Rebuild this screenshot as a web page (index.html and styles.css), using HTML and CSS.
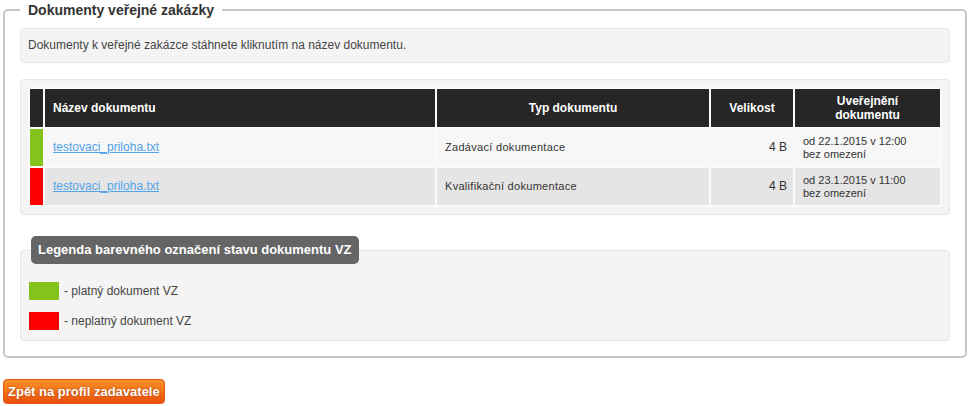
FILE: index.html
```html
<!DOCTYPE html>
<html lang="cs">
<head>
    <meta charset="UTF-8">
    <title>Dokumenty veřejné zakázky</title>
    <link rel="stylesheet" href="styles.css">
</head>
<body>
    <div class="page">
        <fieldset class="docs">
            <legend>Dokumenty veřejné zakázky</legend>
            <div class="info-box">Dokumenty k veřejné zakázce stáhnete kliknutím na název dokumentu.</div>

            <div class="table-panel">
                <table class="doc-table">
                    <thead>
                        <tr>
                            <th class="state"></th>
                            <th class="name">Název dokumentu</th>
                            <th class="type">Typ dokumentu</th>
                            <th class="size">Velikost</th>
                            <th class="date">Uveřejnění<br>dokumentu</th>
                        </tr>
                    </thead>
                    <tbody>
                        <tr class="odd">
                            <td class="state valid"></td>
                            <td class="name"><a href="#">testovaci_priloha.txt</a></td>
                            <td class="type">Zadávací dokumentace</td>
                            <td class="size">4 B</td>
                            <td class="date">od 22.1.2015 v 12:00<br>bez omezení</td>
                        </tr>
                        <tr class="even">
                            <td class="state invalid"></td>
                            <td class="name"><a href="#">testovaci_priloha.txt</a></td>
                            <td class="type">Kvalifikační dokumentace</td>
                            <td class="size">4 B</td>
                            <td class="date">od 23.1.2015 v 11:00<br>bez omezení</td>
                        </tr>
                    </tbody>
                </table>
            </div>

            <div class="legend-panel">
                <div class="legend-title">Legenda barevného označení stavu dokumentu VZ</div>
                <div class="legend-item"><span class="swatch valid"></span>- platný dokument VZ</div>
                <div class="legend-item"><span class="swatch invalid"></span>- neplatný dokument VZ</div>
            </div>
        </fieldset>

        <a class="back-button" href="#">Zpět na profil zadavatele</a>
    </div>
</body>
</html>
```

FILE: styles.css
```css
body {
    margin: 0;
    font-family: "Liberation Sans", Arial, sans-serif;
    font-size: 12px;
    color: #444;
    background: #fff;
}
.page {
    padding: 0 4px 0 3px;
}
.docs {
    margin: 0;
    padding: 0 15px 15px 15px;
    border: 2px solid #c6c6c6;
    border-radius: 5px;
}
.docs legend {
    padding: 0 8px;
    font-size: 14px;
    font-weight: bold;
    color: #333;
    line-height: 20px;
}
.info-box {
    margin-top: 8px;
    padding: 10px 7px 10px 7px;
    line-height: 13px;
    background: #f4f4f4;
    border: 1px solid #e8e8e8;
    border-radius: 4px;
}
.table-panel {
    margin-top: 16px;
    padding: 7px;
    background: #f4f4f4;
    border: 1px solid #e6e6e6;
    border-radius: 4px;
}
.doc-table {
    width: 100%;
    border-collapse: separate;
    border-spacing: 2px;
    background: #fafafa;
    table-layout: fixed;
}
.doc-table th,
.doc-table td {
    box-sizing: border-box;
}
.doc-table th {
    height: 38px;
    padding: 0 8px;
    background: #262626;
    color: #fff;
    font-size: 12px;
    font-weight: bold;
    line-height: 14px;
    text-align: center;
}
.doc-table td {
    height: 37px;
    padding: 0 8px;
    font-size: 11px;
    line-height: 13px;
    color: #333;
}
.doc-table .even td {
    height: 37px;
}
.doc-table th.state,
.doc-table td.state {
    width: 13px;
    padding: 0;
}
.doc-table th.name {
    width: 390px;
    text-align: left;
}
.doc-table th.type {
    width: 272px;
}
.doc-table th.size {
    width: 82px;
}
.doc-table th.date {
    width: 145px;
}
.doc-table td.name a {
    font-size: 12px;
    color: #52a3ec;
}
.doc-table td.type {
    letter-spacing: 0.3px;
}
.doc-table td.size {
    text-align: right;
    padding-right: 6px;
    font-size: 12px;
}
.doc-table td.date {
    vertical-align: top;
    padding-top: 6px;
}
.odd td {
    background: #f7f7f7;
}
.even td {
    background: #e5e5e5;
}
.doc-table td.valid,
.swatch.valid {
    background: #84c31b;
}
.doc-table td.invalid,
.swatch.invalid {
    background: #ff0000;
}
.legend-panel {
    display: flex;
    flex-direction: column;
    align-items: flex-start;
    margin-top: 35px;
    padding: 0 8px 10px 8px;
    background: #f4f4f4;
    border: 1px solid #e6e6e6;
    border-radius: 4px;
}
.legend-title {
    margin: -15px 0 0 2px;
    padding: 0 7px;
    height: 28px;
    line-height: 28px;
    background: #656565;
    border-radius: 5px;
    color: #fff;
    font-size: 13px;
    font-weight: bold;
}
.legend-item {
    display: flex;
    align-items: center;
    gap: 5px;
    height: 18px;
    margin-top: 12px;
    font-size: 12px;
}
.legend-title + .legend-item {
    margin-top: 18px;
}
.swatch {
    width: 30px;
    height: 18px;
}
.back-button {
    display: inline-block;
    margin-top: 21px;
    padding: 0 4px;
    height: 23px;
    line-height: 23px;
    border: 1px solid #e4570f;
    border-radius: 4px;
    background: linear-gradient(#f99226, #e94f0c);
    color: #fff;
    font-size: 13px;
    font-weight: bold;
    text-decoration: none;
    text-shadow: 0 0 2px rgba(120, 30, 0, 0.6);
}
```
